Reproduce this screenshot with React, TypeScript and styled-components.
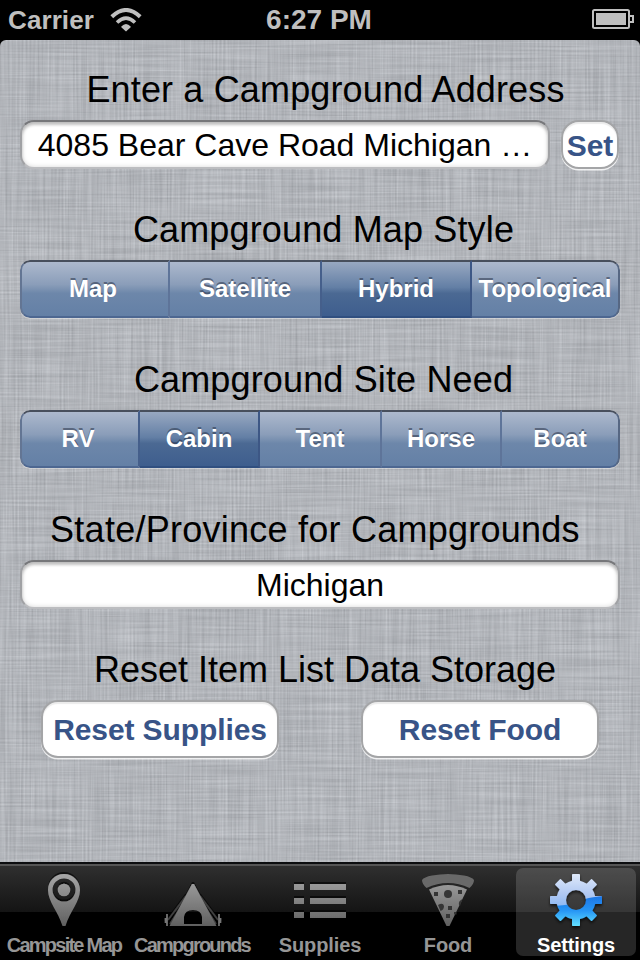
import React from "react";
import styled, { createGlobalStyle, css } from "styled-components";

const GlobalStyle = createGlobalStyle`
  * { box-sizing: border-box; }
  body { margin: 0; background: #000; }
`;

// Woven linen: horizontal and vertical stretched noise over a grey base.
const linen = `<svg xmlns='http://www.w3.org/2000/svg' width='640' height='822'>
<filter id='h' x='0' y='0' width='100%' height='100%' color-interpolation-filters='sRGB'><feTurbulence type='fractalNoise' baseFrequency='0.011 0.5' numOctaves='2' seed='4'/><feColorMatrix values='1.1 0 0 0 -.05  1.1 0 0 0 -.05  1.1 0 0 0 -.05  0 0 0 0 1'/></filter>
<filter id='v' x='0' y='0' width='100%' height='100%' color-interpolation-filters='sRGB'><feTurbulence type='fractalNoise' baseFrequency='0.5 0.011' numOctaves='2' seed='9'/><feColorMatrix values='1.1 0 0 0 -.05  1.1 0 0 0 -.05  1.1 0 0 0 -.05  0 0 0 0 1'/></filter>
<rect width='640' height='822' fill='#c5c9d0'/>
<rect width='640' height='822' filter='url(#h)' opacity='.14'/>
<rect width='640' height='822' filter='url(#v)' opacity='.13'/></svg>`;

const Screen = styled.div`
  width: 640px;
  height: 960px;
  display: flex;
  flex-direction: column;
  overflow: hidden;
  background: #000;
  font-family: "Liberation Sans", Arial, sans-serif;
  color: #000;
`;

const StatusBar = styled.header`
  height: 40px;
  flex: none;
  display: grid;
  grid-template-columns: 1fr auto 1fr;
  align-items: center;
  padding: 0 6px 0 8px;
  color: #bfbfbf;
  font-weight: bold;
`;
const Carrier = styled.div`
  display: flex;
  align-items: center;
  gap: 16px;
  font-size: 26px;
  line-height: 40px;
  letter-spacing: 0.1px;
`;
const Clock = styled.div`
  padding-right: 4px;
  font-size: 28px;
  line-height: 38px;
`;
const BatterySlot = styled.div`
  display: flex;
  justify-content: flex-end;
  padding-bottom: 2px;
`;

const Content = styled.main`
  height: 822px;
  flex: none;
  padding: 30px 20px 0;
  border-radius: 6px 6px 0 0;
  background: #b3b6bc url("data:image/svg+xml,${encodeURIComponent(linen)}");
`;

const Section = styled.section<{ $height: number }>`
  height: ${(p) => p.$height}px;
`;

const Heading = styled.h2<{ $shift: number; $tracking?: number }>`
  margin: 0 0 10px;
  padding-left: ${(p) => Math.max(p.$shift, 0) * 2}px;
  padding-right: ${(p) => Math.max(-p.$shift, 0) * 2}px;
  font-size: 36px;
  font-weight: normal;
  line-height: 40px;
  letter-spacing: ${(p) => p.$tracking ?? 0.15}px;
  text-align: center;
  white-space: nowrap;
`;

const AddressRow = styled.div`
  display: flex;
  gap: 11px;
`;

const Field = styled.div<{ $width: number }>`
  width: ${(p) => p.$width}px;
  height: 49px;
  border: 2px solid #a0a1a4;
  border-top-color: #76777a;
  border-bottom-color: #bcbdc0;
  border-radius: 14px;
  background: #fff;
  box-shadow: inset 0 3px 3px rgba(0, 0, 0, 0.2), inset 0 0 5px rgba(0, 0, 0, 0.16);
  font-size: 32px;
  line-height: 46px;
  text-align: center;
  white-space: nowrap;
`;

const PushButton = styled.button<{ $width: number; $height: number; $radius: number }>`
  width: ${(p) => p.$width}px;
  height: ${(p) => p.$height}px;
  padding: 2px 0 0;
  border: 2px solid #a4a5a7;
  border-radius: ${(p) => p.$radius}px;
  background: #fff;
  box-shadow: inset 0 2px 1px rgba(0, 0, 0, 0.08), 0 1.5px 0 rgba(255, 255, 255, 0.8);
  color: #385487;
  font: bold 30px/1 "Liberation Sans", Arial, sans-serif;
  letter-spacing: -0.1px;
  white-space: nowrap;
`;

const Segments = styled.div<{ $columns: string }>`
  height: 58px;
  display: grid;
  grid-template-columns: ${(p) => p.$columns};
  border-radius: 10px;
  overflow: hidden;
  box-shadow: 0 1px 0 rgba(255, 255, 255, 0.35);
`;

const Segment = styled.div<{ $active?: boolean }>`
  border-top: 2px solid #484f5c;
  border-bottom: 2px solid #4d6791;
  border-right: 2px solid #5e7499;
  background: linear-gradient(#adb9cd 0%, #8a9db9 42%, #6d87aa 58%, #6480a6 100%);
  color: #fff;
  font-size: 24px;
  font-weight: bold;
  line-height: 53px;
  text-align: center;
  text-shadow: 0 -2px 0 rgba(40, 50, 70, 0.55);
  white-space: nowrap;
  &:first-child {
    padding-right: 4px;
    border-left: 2px solid #637593;
    border-radius: 10px 0 0 10px;
  }
  &:last-child { border-right: 2px solid #566783; border-radius: 0 10px 10px 0; }
  &:has(+ [data-active="true"]) { border-right-color: #455f8b; }
  ${(p) =>
    p.$active &&
    css`
      border-right-color: #3d5785;
      border-bottom-color: #304f80;
      background: linear-gradient(#98a8c1 0%, #637fa5 47%, #4b6993 58%, #3e5e8e 100%);
    `}
`;

const ResetRow = styled.div`
  display: flex;
  justify-content: space-between;
  padding: 0 21px;
`;

const TabBar = styled.nav`
  height: 98px;
  flex: none;
  display: grid;
  grid-template-columns: repeat(5, 128px);
  border-top: 2px solid #0c0d0f;
  background: linear-gradient(#555 0 2px, #2f2f2f 2px, #141414 48px, #000 48px);
`;

const Tab = styled.div<{ $active?: boolean }>`
  height: 88px;
  margin: 4px 4px 0;
  display: flex;
  flex-direction: column;
  align-items: center;
  border-radius: 7px;
  background: ${(p) => (p.$active ? "rgba(255,255,255,.15)" : "transparent")};
  color: ${(p) => (p.$active ? "#fff" : "#969696")};
`;

const TabLabel = styled.span<{ $tracking?: number }>`
  margin-top: 2px;
  font-size: 20px;
  font-weight: bold;
  line-height: 22px;
  letter-spacing: ${(p) => p.$tracking ?? -0.1}px;
  white-space: nowrap;
`;

const Glyph = styled.svg`
  width: 120px;
  height: 64px;
  flex: none;
`;

const WifiIcon = () => (
  <svg width="32" height="24" viewBox="0 0 32 24" fill="none" stroke="#bfbfbf" strokeWidth="4">
    <path d="M1.8 8.7Q16 -4.7 30.2 8.7" />
    <path d="M7 14.5Q16 5.9 25 14.5" strokeWidth="3.6" />
    <path d="M11.3 18.6Q16 13.4 20.7 18.6V19.2L16 23.4L11.3 19.2Z" fill="#bfbfbf" stroke="none" />
  </svg>
);

const BatteryIcon = () => (
  <svg width="42" height="20" viewBox="0 0 42 20">
    <rect x="1" y="1" width="36" height="18" rx="1.5" fill="none" stroke="#bfbfbf" strokeWidth="2" />
    <rect x="4" y="4" width="30" height="12" fill="#bfbfbf" />
    <path d="M38 7h3v6h-3" fill="none" stroke="#bfbfbf" strokeWidth="2" />
  </svg>
);

const Defs = ({ id }: { id: string }) => (
  <defs>
    <linearGradient id={id} gradientUnits="userSpaceOnUse" x1="0" y1="5" x2="0" y2="58">
      <stop offset="0" stopColor="#a8a8a8" />
      <stop offset="1" stopColor="#606060" />
    </linearGradient>
    <filter id={`${id}-s`} x="-10%" y="-10%" width="120%" height="120%">
      <feDropShadow dx="0" dy="-2" stdDeviation=".4" floodColor="#000" floodOpacity=".6" />
    </filter>
  </defs>
);

const PinIcon = () => (
  <Glyph viewBox="0 0 120 64">
    <Defs id="pin" />
    <g filter="url(#pin-s)" fill="url(#pin)">
      <path
        fillRule="evenodd"
        d="M60 6C51 6 44 13 44 22C44 34 54 43 58.5 58H61.5C66 43 76 34 76 22C76 13 69 6 60 6ZM60 10.5A11.5 11.5 0 1 1 60 33.5A11.5 11.5 0 1 1 60 10.5Z"
      />
      <circle cx="60" cy="22" r="6.3" />
    </g>
  </Glyph>
);

const TentIcon = () => (
  <Glyph viewBox="0 0 120 64">
    <Defs id="tent" />
    <g filter="url(#tent-s)">
      <path d="M54 28L36 52M68 28L86 52M49 39L38 56M73 39L84 56" stroke="#404040" strokeWidth="1.8" />
      <path d="M35 46V58M87 46V58M33.5 50V55M88.5 50V55" stroke="#747474" strokeWidth="1.7" />
      <path
        fill="url(#tent)"
        fillRule="evenodd"
        d="M60 16H62L84.5 58H37.5ZM52 56H70V49Q69 42 61 42Q53 42 52 49Z"
      />
    </g>
  </Glyph>
);

const ListIcon = () => (
  <Glyph viewBox="0 0 120 64">
    <Defs id="list" />
    <path
      filter="url(#list-s)"
      fill="url(#list)"
      d="M34 16h10v6h-10zM50 16h36v6h-36zM34 30h10v6h-10zM50 30h36v6h-36zM34 44h10v6h-10zM50 44h36v6h-36z"
    />
  </Glyph>
);

const PizzaIcon = () => (
  <Glyph viewBox="0 0 120 64">
    <Defs id="pizza" />
    <path d="M34 12Q36 9 44 7.5Q60 4.5 76 7.5Q84 9 86 12Q86 16 81.5 20Q60 10 38.5 20Q34 16 34 12Z" fill="#696969" />
    <path d="M41 21.5Q60 12.5 79 21.5L61.5 58H58.5Z" fill="url(#pizza)" />
    <g fill="#353535">
      <circle cx="60" cy="26" r="4" />
      <rect x="46" y="24" width="4" height="4" />
      <rect x="70" y="22" width="4" height="4" />
      <path d="M50 37Q55 34 56 38Q56 42 52.5 43ZM74.5 31Q70 33 71 37L72 38Z" />
      <rect x="60" y="38" width="4" height="4" />
      <rect x="58" y="46" width="4" height="4" />
      <rect x="66" y="44" width="2.5" height="2.5" />
    </g>
  </Glyph>
);

const GearIcon = () => (
  <Glyph viewBox="0 0 120 64">
    <defs>
      <linearGradient id="gear-top" x1="0" y1="0" x2="0" y2="1">
        <stop offset="0" stopColor="#e4edfb" />
        <stop offset=".65" stopColor="#b0c8f3" />
        <stop offset="1" stopColor="#8fb9f2" />
      </linearGradient>
      <linearGradient id="gear-low" gradientUnits="userSpaceOnUse" x1="0" y1="28" x2="0" y2="58">
        <stop offset="0" stopColor="#1c75e6" />
        <stop offset=".5" stopColor="#2797f5" />
        <stop offset="1" stopColor="#62e0ff" />
      </linearGradient>
      <mask id="gear-mask">
        <g fill="#fff">
          <circle cx="60" cy="32" r="19.5" />
          {[0, 45, 90, 135].map((a) => (
            <rect key={a} x="56" y="6" width="8" height="52" rx=".7" transform={`rotate(${a} 60 32)`} />
          ))}
        </g>
        <circle cx="60" cy="32" r="10" />
      </mask>
      <filter id="gear-s">
        <feDropShadow dx="0" dy="2" stdDeviation="1.5" floodColor="#000" floodOpacity=".7" />
      </filter>
    </defs>
    <g filter="url(#gear-s)">
      <g mask="url(#gear-mask)">
        <rect x="32" y="4" width="56" height="56" fill="url(#gear-low)" />
        <path d="M32 4H88V28Q76 29 69 31Q57 38 32 38Z" fill="url(#gear-top)" />
      </g>
    </g>
  </Glyph>
);

const tabs = [
  { label: "Campsite Map", Icon: PinIcon, tracking: -1.75 },
  { label: "Campgrounds", Icon: TentIcon, tracking: -1.8 },
  { label: "Supplies", Icon: ListIcon },
  { label: "Food", Icon: PizzaIcon },
  { label: "Settings", Icon: GearIcon, active: true },
];

const SegmentedControl = ({ items, selected, columns }: { items: string[]; selected: string; columns: string }) => (
  <Segments $columns={columns}>
    {items.map((item) => (
      <Segment key={item} $active={item === selected} data-active={item === selected}>
        {item}
      </Segment>
    ))}
  </Segments>
);

export default function App() {
  return (
    <Screen>
      <GlobalStyle />
      <StatusBar>
        <Carrier>
          Carrier
          <WifiIcon />
        </Carrier>
        <Clock>6:27 PM</Clock>
        <BatterySlot>
          <BatteryIcon />
        </BatterySlot>
      </StatusBar>
      <Content>
        <Section $height={140}>
          <Heading $shift={5.5}>Enter a Campground Address</Heading>
          <AddressRow>
            <Field $width={530}>4085 Bear Cave Road Michigan …</Field>
            <PushButton $width={58} $height={49} $radius={18}>Set</PushButton>
          </AddressRow>
        </Section>
        <Section $height={150}>
          <Heading $shift={3.5}>Campground Map Style</Heading>
          <SegmentedControl
            items={["Map", "Satellite", "Hybrid", "Topological"]}
            selected="Hybrid"
            columns="150px 152px 150px 148px"
          />
        </Section>
        <Section $height={150}>
          <Heading $shift={3.5}>Campground Site Need</Heading>
          <SegmentedControl
            items={["RV", "Cabin", "Tent", "Horse", "Boat"]}
            selected="Cabin"
            columns="120px 120px 122px 120px 118px"
          />
        </Section>
        <Section $height={140}>
          <Heading $shift={-5} $tracking={0.25}>State/Province for Campgrounds</Heading>
          <Field $width={600}>Michigan</Field>
        </Section>
        <Section $height={150}>
          <Heading $shift={5} $tracking={0}>Reset Item List Data Storage</Heading>
          <ResetRow>
            <PushButton $width={238} $height={58} $radius={17}>Reset Supplies</PushButton>
            <PushButton $width={238} $height={58} $radius={17}>Reset Food</PushButton>
          </ResetRow>
        </Section>
      </Content>
      <TabBar>
        {tabs.map(({ label, Icon, tracking, active }) => (
          <Tab key={label} $active={active}>
            <Icon />
            <TabLabel $tracking={tracking}>{label}</TabLabel>
          </Tab>
        ))}
      </TabBar>
    </Screen>
  );
}
